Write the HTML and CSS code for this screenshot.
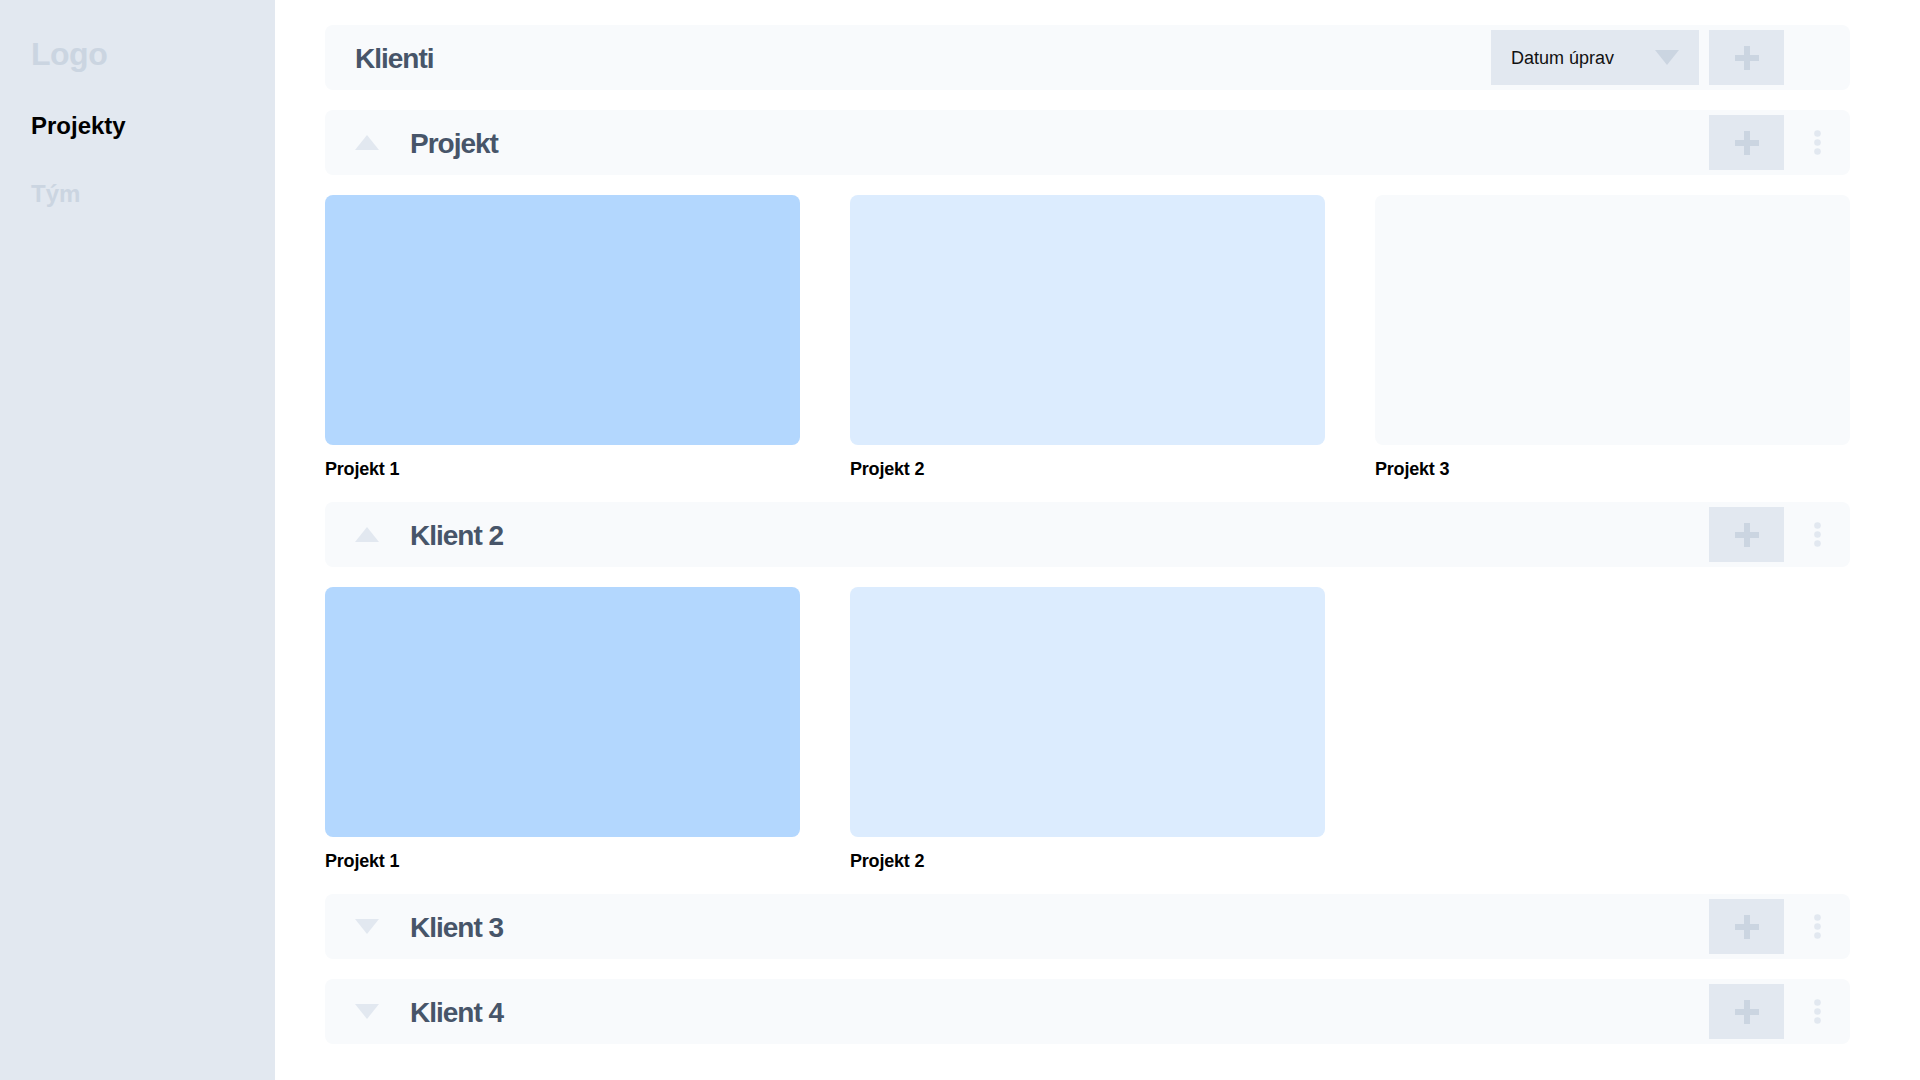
FILE: index.html
```html
<!DOCTYPE html>
<html lang="cs">
<head>
<meta charset="utf-8">
<title>Projekty</title>
<link rel="stylesheet" href="styles.css">
</head>
<body>
<div class="app">
  <aside class="sidebar">
    <div class="logo">Logo</div>
    <nav class="nav">
      <a class="nav-item active">Projekty</a>
      <a class="nav-item">Tým</a>
    </nav>
  </aside>
  <main class="main">
    <div class="bar">
      <h1 class="bar-title">Klienti</h1>
      <div class="select">
        <span class="select-text">Datum úprav</span>
        <svg class="select-caret" width="24" height="15" viewBox="0 0 24 15"><polygon points="0,0 24,0 12,15"/></svg>
      </div>
      <button class="add-btn"><svg width="24" height="24" viewBox="0 0 24 24"><rect x="0" y="9" width="24" height="6"/><rect x="9" y="0" width="6" height="24"/></svg></button>
      <div class="more-slot"></div>
    </div>

    <div class="bar">
      <svg class="toggle" width="24" height="15" viewBox="0 0 24 15"><polygon points="12,0 24,15 0,15"/></svg>
      <h2 class="bar-title">Projekt</h2>
      <button class="add-btn"><svg width="24" height="24" viewBox="0 0 24 24"><rect x="0" y="9" width="24" height="6"/><rect x="9" y="0" width="6" height="24"/></svg></button>
      <div class="more-slot"><svg width="7" height="25" viewBox="0 0 7 25"><circle cx="3.5" cy="3.5" r="3.3"/><circle cx="3.5" cy="12.5" r="3.3"/><circle cx="3.5" cy="21.5" r="3.3"/></svg></div>
    </div>
    <div class="grid">
      <div class="project"><div class="thumb thumb-a"></div><div class="project-name">Projekt 1</div></div>
      <div class="project"><div class="thumb thumb-b"></div><div class="project-name">Projekt 2</div></div>
      <div class="project"><div class="thumb thumb-c"></div><div class="project-name">Projekt 3</div></div>
    </div>

    <div class="bar">
      <svg class="toggle" width="24" height="15" viewBox="0 0 24 15"><polygon points="12,0 24,15 0,15"/></svg>
      <h2 class="bar-title">Klient 2</h2>
      <button class="add-btn"><svg width="24" height="24" viewBox="0 0 24 24"><rect x="0" y="9" width="24" height="6"/><rect x="9" y="0" width="6" height="24"/></svg></button>
      <div class="more-slot"><svg width="7" height="25" viewBox="0 0 7 25"><circle cx="3.5" cy="3.5" r="3.3"/><circle cx="3.5" cy="12.5" r="3.3"/><circle cx="3.5" cy="21.5" r="3.3"/></svg></div>
    </div>
    <div class="grid">
      <div class="project"><div class="thumb thumb-a"></div><div class="project-name">Projekt 1</div></div>
      <div class="project"><div class="thumb thumb-b"></div><div class="project-name">Projekt 2</div></div>
    </div>

    <div class="bar">
      <svg class="toggle" width="24" height="15" viewBox="0 0 24 15"><polygon points="0,0 24,0 12,15"/></svg>
      <h2 class="bar-title">Klient 3</h2>
      <button class="add-btn"><svg width="24" height="24" viewBox="0 0 24 24"><rect x="0" y="9" width="24" height="6"/><rect x="9" y="0" width="6" height="24"/></svg></button>
      <div class="more-slot"><svg width="7" height="25" viewBox="0 0 7 25"><circle cx="3.5" cy="3.5" r="3.3"/><circle cx="3.5" cy="12.5" r="3.3"/><circle cx="3.5" cy="21.5" r="3.3"/></svg></div>
    </div>

    <div class="bar">
      <svg class="toggle" width="24" height="15" viewBox="0 0 24 15"><polygon points="0,0 24,0 12,15"/></svg>
      <h2 class="bar-title">Klient 4</h2>
      <button class="add-btn"><svg width="24" height="24" viewBox="0 0 24 24"><rect x="0" y="9" width="24" height="6"/><rect x="9" y="0" width="6" height="24"/></svg></button>
      <div class="more-slot"><svg width="7" height="25" viewBox="0 0 7 25"><circle cx="3.5" cy="3.5" r="3.3"/><circle cx="3.5" cy="12.5" r="3.3"/><circle cx="3.5" cy="21.5" r="3.3"/></svg></div>
    </div>
  </main>
</div>
</body>
</html>
```
FILE: styles.css
```css
* { box-sizing: border-box; }

html, body {
  margin: 0;
  padding: 0;
  height: 100%;
  background: #ffffff;
  font-family: "Liberation Sans", Arial, sans-serif;
}

.app {
  display: flex;
  min-height: 1080px;
}

.sidebar {
  width: 275px;
  flex: none;
  background: #e2e8f0;
  padding: 34px 31px 0 31px;
  display: flex;
  flex-direction: column;
  gap: 36px;
}

.logo {
  font-size: 32px;
  line-height: 40px;
  font-weight: 700;
  letter-spacing: -0.5px;
  color: #cbd5e1;
}

.nav {
  display: flex;
  flex-direction: column;
  gap: 36px;
}

.nav-item {
  display: block;
  font-size: 24px;
  line-height: 32px;
  font-weight: 700;
  color: #cbd5e1;
}

.nav-item.active {
  color: #000000;
}

.main {
  width: 1525px;
  margin-left: 50px;
  padding-top: 25px;
  display: flex;
  flex-direction: column;
  gap: 20px;
}

.bar {
  height: 65px;
  background: #f8fafc;
  border-radius: 8px;
  padding: 5px 0 5px 30px;
  display: flex;
  align-items: center;
}

.bar-title {
  flex: 1;
  margin: 0;
  padding-top: 2px;
  font-size: 28px;
  font-weight: 700;
  letter-spacing: -1px;
  color: #475569;
}

.toggle {
  flex: none;
  fill: #e2e8f0;
  margin-right: 31px;
}

.select {
  width: 208px;
  height: 55px;
  background: #e2e8f0;
  display: flex;
  align-items: center;
  justify-content: space-between;
  padding: 0 20px 0 20px;
  margin-right: 10px;
}

.select-text {
  padding-top: 2px;
  font-size: 18px;
  color: #111111;
}

.select-caret {
  fill: #cbd5e1;
}

.add-btn {
  width: 75px;
  height: 55px;
  border: 0;
  padding: 0;
  background: #e2e8f0;
  display: flex;
  align-items: center;
  justify-content: center;
  flex: none;
}

.add-btn svg {
  fill: #cbd5e1;
}

.more-slot {
  width: 66px;
  height: 55px;
  flex: none;
  display: flex;
  align-items: center;
  justify-content: center;
}

.more-slot svg {
  fill: #e2e8f0;
}

.grid {
  display: grid;
  grid-template-columns: repeat(3, 475px);
  column-gap: 50px;
}

.thumb {
  height: 250px;
  border-radius: 8px;
}

.thumb-a { background: #b3d7fe; }
.thumb-b { background: #dcecfe; }
.thumb-c { background: #f8fafc; }

.project-name {
  margin-top: 12px;
  font-size: 18px;
  line-height: 25px;
  font-weight: 700;
  letter-spacing: -0.2px;
  color: #000000;
}
```
